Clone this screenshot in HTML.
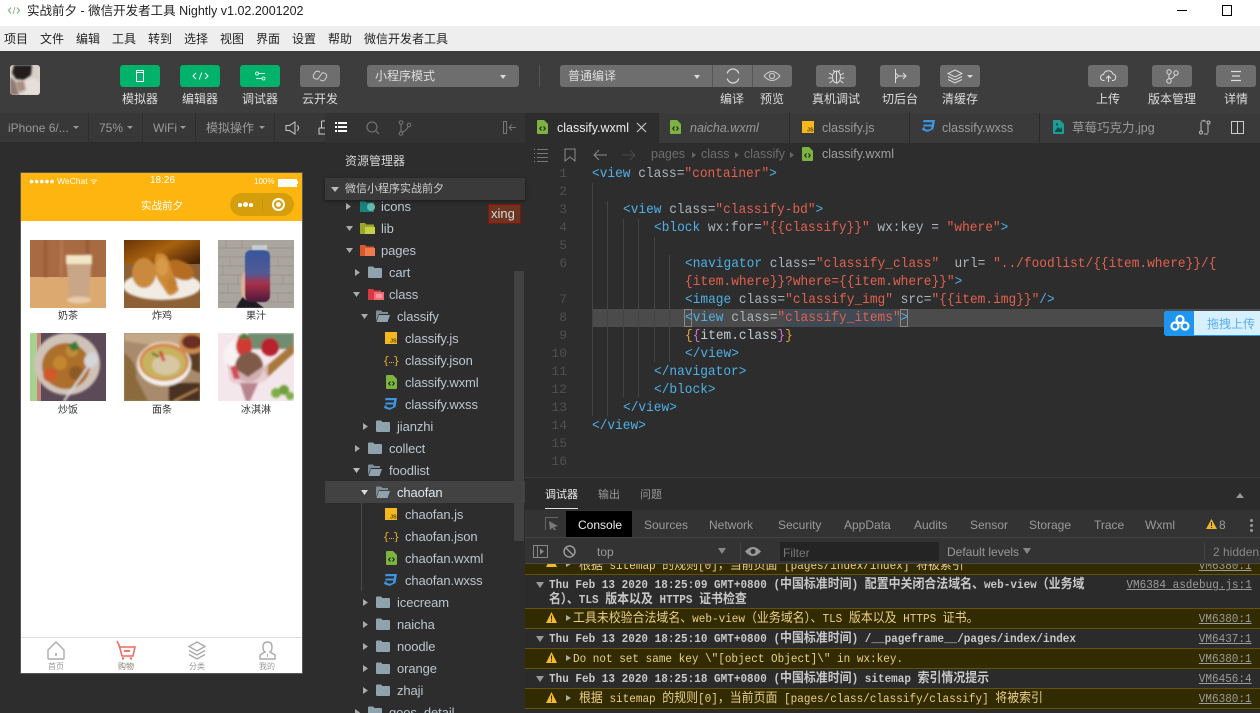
<!DOCTYPE html>
<html><head><meta charset="utf-8"><title>实战前夕</title>
<style>
html,body{margin:0;padding:0;width:1260px;height:713px;overflow:hidden;background:#2d2d2d}
body{position:relative;font-family:"Liberation Sans","Noto Sans CJK SC",sans-serif;font-size:12px;color:#ddd}
.a{position:absolute;white-space:pre;line-height:18px}
.b{position:absolute}
.btn{position:absolute;top:65px;width:40px;height:22px;border-radius:3px;background:#6e6e6e}
.g{background:#00b26a}
.lb{position:absolute;top:90px;line-height:18px;color:#ddd;text-align:center;white-space:pre}
.sv{position:absolute;overflow:visible}
.t{position:absolute;white-space:pre;line-height:18px;color:#bcc6cf;font-size:13px;letter-spacing:-.1px;margin-top:1px}
.cd{position:absolute;white-space:pre;font-family:"Liberation Mono",monospace;font-size:14px;line-height:18px;color:#aeb6bd;transform:scaleX(.9167);transform-origin:0 0;margin-top:1px}
.n{position:absolute;width:30px;left:537px;text-align:right;font-family:"Liberation Mono",monospace;font-size:13px;line-height:18px;color:#505050;margin-top:1px}
.k{color:#4fb0e6}.s{color:#e2614f}
.ig{position:absolute;width:1px;background:#444}
.ct{position:absolute;top:516px;line-height:18px;color:#9a9a9a;white-space:pre}
.r{position:absolute;left:525px;width:735px}
.w{background:#332b00;border-top:1px solid #665200;border-bottom:1px solid #665200;box-sizing:border-box}
.m{position:absolute;white-space:pre;font-family:"Liberation Mono","Noto Sans CJK SC",monospace;font-size:12px;line-height:18px;transform:scaleX(.9167);transform-origin:0 0}
.m i{font-style:normal;font-size:13px}
.lg{color:#c8c8c8;font-weight:bold}
.wt{color:#e9cf88}
.lk{position:absolute;right:8px;font-family:"Liberation Mono",monospace;font-size:12px;line-height:18px;color:#9a9a9a;text-decoration:underline;white-space:pre;transform:scaleX(.9167);transform-origin:100% 0}
.lab{position:absolute;width:76px;text-align:center;font-size:10px;line-height:14px;color:#333}
.tb{position:absolute;font-size:8px;line-height:10px;top:662px;color:#999;text-align:center;width:40px}
.ph{position:absolute;width:76px;height:68px;overflow:hidden}
</style></head><body>
<svg width="0" height="0" style="position:absolute"><defs>
<symbol id="fc" viewBox="0 0 14 12"><path d="M0 1.5Q0 .5 1 .5H5L6.5 2H13Q14 2 14 3V11Q14 12 13 12H1Q0 12 0 11Z" fill="#8fa2ad"/></symbol>
<symbol id="fo" viewBox="0 0 14 12"><path d="M0 1.5Q0 .5 1 .5H5L6.5 2H12V4H3L0 11Z" fill="#7d8e98"/><path d="M3 5H14L11.5 12H.5Z" fill="#8fa2ad"/></symbol>
<symbol id="js" viewBox="0 0 12 12"><rect width="12" height="12" fill="#f5b81f"/><text x="5" y="10.5" font-size="5.5" font-weight="bold" font-family="Liberation Sans" fill="#5b4300">JS</text></symbol>
<symbol id="jn" viewBox="0 0 16 12"><text x="0" y="10" font-size="11" font-family="Liberation Mono" fill="#f0b429">{</text><text x="10" y="10" font-size="11" font-family="Liberation Mono" fill="#f0b429">}</text><rect x="6" y="8" width="1" height="1" fill="#f0b429"/><rect x="8" y="8" width="1" height="1" fill="#f0b429"/><rect x="10" y="8" width="1" height="1" fill="#f0b429"/></symbol>
<symbol id="wx" viewBox="0 0 11 14"><path d="M1 0H7L11 4V13Q11 14 10 14H1Q0 14 0 13V1Q0 0 1 0Z" fill="#7cb342"/><path d="M4.5 6.5L2.8 8.5L4.5 10.5M6.5 6.5L8.2 8.5L6.5 10.5" fill="none" stroke="#20300f" stroke-width="1.2"/></symbol>
<symbol id="cs" viewBox="0 0 13 12"><path d="M1.5 0H13L11.5 9L5.5 12L0 10L.6 7.5H3L2.7 8.8L5.7 9.8L9 8.6L9.4 6.5H1.2L1.6 4.5H9.8L10.2 2.3H1Z" fill="#3d94e0"/></symbol>
<symbol id="jp" viewBox="0 0 11 14"><path d="M1 0H7L11 4V13Q11 14 10 14H1Q0 14 0 13V1Q0 0 1 0Z" fill="#1f9c94"/><path d="M2 11L5 7L7 9L9 7V12H2Z" fill="#0d4f4b"/><circle cx="4" cy="4.5" r="1.2" fill="#0d4f4b"/></symbol>
<filter id="bl"><feGaussianBlur stdDeviation="1"/></filter>
<filter id="bs"><feGaussianBlur stdDeviation=".5"/></filter>
</defs></svg>

<!-- title bar -->
<div class="b" style="left:0;top:0;width:1260px;height:26px;background:#fff"></div>
<svg class="sv" style="left:8px;top:6px" width="12" height="9"><path d="M3 1.500L.5 4.500L3 7.500" fill="none" stroke="#66bb6a" stroke-width="1"/><path d="M9 1.500L11.500 4.500L9 7.500" fill="none" stroke="#66bb6a" stroke-width="1"/><path d="M7 1L5 8" stroke="#999" stroke-width=".8"/></svg>
<div class="a" style="left:27px;top:2px;color:#222;font-size:12.5px">实战前夕 - 微信开发者工具 Nightly v1.02.2001202</div>
<div class="b" style="left:1177px;top:10px;width:10px;height:1px;background:#000"></div>
<div class="b" style="left:1222px;top:5px;width:8px;height:9px;border:1px solid #000"></div>
<!-- menu -->
<div class="b" style="left:0;top:26px;width:1260px;height:25px;background:#eeeeee"></div>
<div class="a" style="left:4px;top:30px;color:#222">项目</div><div class="a" style="left:40px;top:30px;color:#222">文件</div><div class="a" style="left:76px;top:30px;color:#222">编辑</div><div class="a" style="left:112px;top:30px;color:#222">工具</div><div class="a" style="left:148px;top:30px;color:#222">转到</div><div class="a" style="left:184px;top:30px;color:#222">选择</div><div class="a" style="left:220px;top:30px;color:#222">视图</div><div class="a" style="left:256px;top:30px;color:#222">界面</div><div class="a" style="left:292px;top:30px;color:#222">设置</div><div class="a" style="left:328px;top:30px;color:#222">帮助</div><div class="a" style="left:364px;top:30px;color:#222">微信开发者工具</div>

<!-- toolbar -->
<div class="b" style="left:0;top:51px;width:1260px;height:62px;background:#3d3d3d"></div>
<svg class="sv" style="left:10px;top:65px" width="30" height="30" viewBox="0 0 30 30"><clipPath id="av"><rect width="30" height="30" rx="3"/></clipPath><g clip-path="url(#av)"><rect width="30" height="30" fill="#d9d0ca"/><g filter="url(#bl)"><path d="M4 0H22L21 10L14 15L6 14L2 8Z" fill="#241e1a"/><path d="M0 12L5 16L9 30H0Z" fill="#8f7a72"/><path d="M14 16L24 13L30 18V30H14Z" fill="#e6ded8"/><path d="M6 17L14 16L16 25L9 27Z" fill="#a98e84"/></g></g></svg>

<div class="btn g" style="left:120px"></div><div class="btn g" style="left:180px"></div><div class="btn g" style="left:240px"></div><div class="btn" style="left:300px"></div>
<svg class="sv" style="left:135px;top:70px" width="10" height="12"><rect x="1.5" y=".5" width="7" height="11" fill="none" stroke="#fff"/><line x1="2" y1="2.5" x2="8" y2="2.5" stroke="#fff"/></svg>
<svg class="sv" style="left:192px;top:71px" width="17" height="10"><path d="M4 2L1 5L4 8M13 2L16 5L13 8M9.8 1.5L7.2 8.5" fill="none" stroke="#fff"/></svg>
<svg class="sv" style="left:255px;top:71px" width="11" height="10"><circle cx="2" cy="2.5" r="1.5" fill="none" stroke="#cfeee0"/><path d="M4 2.5H10M1 7.5H7" stroke="#cfeee0"/><circle cx="8.5" cy="7.5" r="1.5" fill="none" stroke="#cfeee0"/></svg>
<svg class="sv" style="left:312px;top:70px" width="16" height="12"><path d="M8 2.5A3 3 0 0 0 3 2.5L1.5 5A3 3 0 0 0 6 8.5M8 9.5A3 3 0 0 0 13 9.5L14.5 7A3 3 0 0 0 10 3.5M5.5 9.5L10.5 2.5" fill="none" stroke="#d2d2d2"/></svg>
<div class="lb" style="left:120px;width:40px">模拟器</div><div class="lb" style="left:180px;width:40px">编辑器</div><div class="lb" style="left:240px;width:40px">调试器</div><div class="lb" style="left:300px;width:40px">云开发</div>

<div class="btn" style="left:367px;width:152px"></div>
<div class="a" style="left:375px;top:67px;color:#ddd">小程序模式</div>
<div class="b" style="left:500px;top:75px;border:3px solid transparent;border-top:4px solid #ddd;border-bottom:0"></div>
<div class="b" style="left:539px;top:65px;width:1px;height:22px;background:#555"></div>

<div class="btn" style="left:560px;width:232px"></div>
<div class="a" style="left:568px;top:67px;color:#ddd">普通编译</div>
<div class="b" style="left:694px;top:75px;border:3px solid transparent;border-top:4px solid #ddd;border-bottom:0"></div>
<div class="b" style="left:712px;top:65px;width:1px;height:22px;background:#555"></div><div class="b" style="left:752px;top:65px;width:1px;height:22px;background:#555"></div>
<svg class="sv" style="left:725px;top:68px" width="16" height="16"><path d="M2.2 5.5A6 6 0 0 1 13.8 5.5M13.8 10.5A6 6 0 0 1 2.2 10.5" fill="none" stroke="#dcdcdc" stroke-width="1.2"/></svg>
<svg class="sv" style="left:763px;top:70px" width="18" height="12"><path d="M1 6Q9 -3 17 6Q9 15 1 6Z" fill="none" stroke="#cfcfcf"/><circle cx="9" cy="6" r="2.6" fill="none" stroke="#cfcfcf"/></svg>
<div class="lb" style="left:712px;width:40px">编译</div><div class="lb" style="left:752px;width:40px">预览</div>

<div class="btn" style="left:816px"></div><div class="btn" style="left:880px"></div><div class="btn" style="left:940px"></div>
<svg class="sv" style="left:828px;top:67px" width="17" height="18"><ellipse cx="8.5" cy="10" rx="4" ry="6" fill="none" stroke="#ddd"/><path d="M8.5 4V16M5 3L7 5M12 3L10 5M1 6L4.5 8M16 6L12.5 8M0.5 11H4M16.5 11H13M1.5 16L5 13.5M15.5 16L12 13.5" stroke="#ddd" fill="none"/></svg>
<svg class="sv" style="left:893px;top:69px" width="15" height="14"><path d="M2.5 0V14M5 7H13M10 4L13 7L10 10M2.5 4L5.5 7L2.5 10" fill="none" stroke="#ddd"/></svg>
<svg class="sv" style="left:947px;top:69px" width="26" height="15"><path d="M8 1L15 4.5L8 8L1 4.5ZM1 7.5L8 11L15 7.5M1 10.5L8 14L15 10.5" fill="none" stroke="#ddd"/><path d="M20 6H26L23 9Z" fill="#ddd"/></svg>
<div class="lb" style="left:806px;width:60px">真机调试</div><div class="lb" style="left:870px;width:60px">切后台</div><div class="lb" style="left:930px;width:60px">清缓存</div>

<div class="btn" style="left:1088px"></div><div class="btn" style="left:1152px"></div><div class="btn" style="left:1216px"></div>
<svg class="sv" style="left:1100px;top:70px" width="17" height="12"><path d="M4.5 10.5H3.5A3 3 0 0 1 3.5 4.5A5 5 0 0 1 13 4A3.3 3.3 0 0 1 13 10.5H12" fill="none" stroke="#e2e2e2"/><path d="M8.5 12V6M6 8.5L8.5 6L11 8.5" fill="none" stroke="#e2e2e2"/></svg>
<svg class="sv" style="left:1166px;top:69px" width="13" height="15"><circle cx="3" cy="3" r="2.2" fill="none" stroke="#ddd"/><circle cx="3" cy="12" r="2.2" fill="none" stroke="#ddd"/><circle cx="10" cy="4" r="2.2" fill="none" stroke="#ddd"/><path d="M3 5V10M9 6Q8 9 4.5 10" fill="none" stroke="#ddd"/></svg>
<svg class="sv" style="left:1230px;top:70px" width="12" height="12"><path d="M1 1.5H11M2 6H10M1 10.5H11" stroke="#ddd" stroke-width="1.2"/></svg>
<div class="lb" style="left:1088px;width:40px">上传</div><div class="lb" style="left:1142px;width:60px">版本管理</div><div class="lb" style="left:1216px;width:40px">详情</div>

<!-- left panel -->
<div class="b" style="left:0;top:113px;width:325px;height:600px;background:#2d2d2d"></div>
<div class="b" style="left:0;top:113px;width:325px;height:30px;background:#383838;border-bottom:1px solid #2a2a2a;box-sizing:border-box"></div>
<div class="a" style="left:8px;top:119px;color:#9a9a9a">iPhone 6/...</div>
<div class="b" style="left:73px;top:126px;border:3px solid transparent;border-top:3px solid #999;border-bottom:0"></div>
<div class="b" style="left:88px;top:113px;width:1px;height:30px;background:#2e2e2e"></div>
<div class="a" style="left:99px;top:119px;color:#9a9a9a">75%</div>
<div class="b" style="left:127px;top:126px;border:3px solid transparent;border-top:3px solid #999;border-bottom:0"></div>
<div class="b" style="left:142px;top:113px;width:1px;height:30px;background:#2e2e2e"></div>
<div class="a" style="left:153px;top:119px;color:#9a9a9a">WiFi</div>
<div class="b" style="left:180px;top:126px;border:3px solid transparent;border-top:3px solid #999;border-bottom:0"></div>
<div class="b" style="left:195px;top:113px;width:1px;height:30px;background:#2e2e2e"></div>
<div class="a" style="left:206px;top:119px;color:#9a9a9a">模拟操作</div>
<div class="b" style="left:259px;top:126px;border:3px solid transparent;border-top:3px solid #999;border-bottom:0"></div>
<div class="b" style="left:274px;top:113px;width:1px;height:30px;background:#2e2e2e"></div>
<svg class="sv" style="left:285px;top:121px" width="16" height="14"><path d="M1 4.5H4.5L10 1V13L4.5 9.5H1ZM12.5 4Q14.5 7 12.5 10" fill="none" stroke="#ccc"/></svg>
<svg class="sv" style="left:318px;top:120px" width="7" height="15"><path d="M3.5 1H7M3.5 1V8M1 8H7M1 8V14H7" fill="none" stroke="#ccc"/></svg>

<!-- phone -->
<div class="b" style="left:20px;top:172px;width:281px;height:500px;background:#fff;border:1px solid #555"></div>
<div class="b" style="left:21px;top:173px;width:281px;height:48px;background:#ffb510"></div>
<div class="a" style="left:29px;top:172px;color:#fff;font-size:8.5px;line-height:18px">●●●●● WeChat ᯤ</div>
<div class="a" style="left:150px;top:172px;color:#fff;font-size:10px">18:26</div>
<div class="a" style="left:254px;top:173px;color:#fff;font-size:8px">100%</div>
<div class="b" style="left:278px;top:179px;width:17px;height:6px;border:1px solid #fff;background:#fff"></div><div class="b" style="left:297px;top:181px;width:1px;height:3px;background:#fff"></div>
<div class="a" style="left:141px;top:197px;color:#fff;font-size:10.5px">实战前夕</div>
<div class="b" style="left:230px;top:193px;width:64px;height:23px;border-radius:12px;background:#d49e0d"></div>
<div class="b" style="left:238px;top:203px;width:3.5px;height:3.5px;border-radius:50%;background:#fff"></div><div class="b" style="left:243px;top:202px;width:5px;height:5px;border-radius:50%;background:#fff"></div><div class="b" style="left:249px;top:203px;width:3.5px;height:3.5px;border-radius:50%;background:#fff"></div>
<div class="b" style="left:262px;top:197px;width:1px;height:15px;background:#c9950c"></div>
<div class="b" style="left:272px;top:198px;width:9px;height:9px;border:2px solid #fff;border-radius:50%;box-sizing:content-box"></div><div class="b" style="left:276px;top:202px;width:5px;height:5px;border-radius:50%;background:#fff"></div>

<!-- photos -->
<svg class="ph" style="left:30px;top:240px" viewBox="0 0 76 68"><rect width="76" height="38" fill="#a86a42"/><rect y="37" width="76" height="31" fill="#dcaa70"/><g filter="url(#bl)"><rect x="14" y="0" width="3" height="37" fill="#9a5a34"/><rect x="30" y="0" width="3" height="37" fill="#b57a52"/><rect x="56" y="0" width="3" height="37" fill="#985832"/><path d="M36 15H62L59 58Q49 62 39 58Z" fill="#c9a687"/><rect x="36" y="15" width="26" height="9" fill="#f1e6c8"/><ellipse cx="49" cy="60" rx="12" ry="3.500" fill="#e6cba8"/></g></svg>
<svg class="ph" style="left:124px;top:240px" viewBox="0 0 76 68"><defs><linearGradient id="w2" x1="0" y1="0" x2="1" y2=".7"><stop offset="0" stop-color="#6a3408"/><stop offset=".5" stop-color="#a8620f"/><stop offset="1" stop-color="#4a2408"/></linearGradient></defs><rect width="76" height="28" fill="url(#w2)"/><rect y="24" width="76" height="44" fill="#8d6035"/><g filter="url(#bl)"><ellipse cx="38" cy="46" rx="39" ry="14" fill="#f1ece3"/><ellipse cx="20" cy="33" rx="12" ry="15" fill="#c98a3c"/><ellipse cx="56" cy="30" rx="15" ry="9" fill="#b56d22" transform="rotate(25 56 30)"/><path d="M32 14Q44 10 46 26L55 50Q46 60 42 52L34 40Q28 28 32 14Z" fill="#cd8a36"/><ellipse cx="38" cy="27" rx="6" ry="9" fill="#d89a48"/><ellipse cx="48" cy="44" rx="5" ry="7" fill="#c4802e"/></g></svg>
<svg class="ph" style="left:218px;top:240px" viewBox="0 0 76 68"><rect width="76" height="68" fill="#aaa59e"/><g stroke="#979289" stroke-width=".7"><path d="M0 8H76M0 17H76M0 26H76M0 35H76M0 44H76M0 53H76M0 62H76"/><path d="M8 0V8M24 0V8M40 8V17M12 17V26M60 17V26M5 26V35M20 35V44M65 35V44M10 44V53M60 53V62M25 53V62"/></g><g filter="url(#bs)"><path d="M18 68Q24 56 28 55L38 62L46 68Z" fill="#1c1c20"/><path d="M24 56Q21 40 26 32L32 34V58L28 60Z" fill="#dcaf98"/><rect x="34" y="5" width="15" height="6" fill="#c8ccd0" rx="1"/><defs><linearGradient id="bt" x1="0" y1="0" x2="0" y2="1"><stop offset="0" stop-color="#35599c"/><stop offset=".45" stop-color="#525a94"/><stop offset=".65" stop-color="#a8304a"/><stop offset="1" stop-color="#4a1a3a"/></linearGradient></defs><rect x="27" y="10" width="25" height="52" rx="6" fill="url(#bt)"/></g></svg>

<svg class="ph" style="left:30px;top:333px" viewBox="0 0 76 68"><rect width="76" height="68" fill="#5d4a58"/><rect width="7" height="68" fill="#a8d090"/><rect x="7" width="4" height="68" fill="#c8867a"/><g filter="url(#bl)"><ellipse cx="37" cy="31" rx="33" ry="31" fill="#cfc3b8"/><ellipse cx="36" cy="33" rx="24" ry="23" fill="#ad6f2c"/><circle cx="20" cy="42" r="7" fill="#cf5a2c"/><circle cx="42" cy="18" r="6" fill="#c08a3a"/><circle cx="30" cy="30" r="7" fill="#c4862e"/><circle cx="46" cy="40" r="7" fill="#8d5a26"/><path d="M38 12L46 8L50 16L42 18Z" fill="#3f7a33"/><path d="M34 68L58 34" stroke="#d9d9d9" stroke-width="2"/><ellipse cx="61" cy="27" rx="6.500" ry="8" fill="#d4d6da" transform="rotate(30 61 27)"/></g></svg>
<svg class="ph" style="left:124px;top:333px" viewBox="0 0 76 68"><rect width="76" height="68" fill="#a88b6c"/><g filter="url(#bl)"><path d="M0 0H76V12L40 14L0 8Z" fill="#c3a888"/><path d="M45 50H76V68H45Z" fill="#4a3322"/><path d="M60 14H76V40L62 34Z" fill="#5a3a24"/><path d="M0 20Q14 30 12 45L24 68H0Z" fill="#8b6a3d"/><ellipse cx="40" cy="31" rx="27" ry="22" fill="#f1efe8"/><ellipse cx="40" cy="29" rx="25" ry="19" fill="#d68a50"/><ellipse cx="40" cy="30" rx="22" ry="16" fill="#c7b25f"/><ellipse cx="42" cy="32" rx="14" ry="10" fill="#d8c7a4"/><path d="M36 18L40 28" stroke="#d33a2a" stroke-width="3"/><path d="M28 20L35 24" stroke="#3c6d2c" stroke-width="2"/><ellipse cx="68" cy="10" rx="13" ry="11" fill="#c98a4e"/><ellipse cx="68" cy="9" rx="10" ry="7" fill="#6a2f22"/><path d="M50 68L74 56" stroke="#b98450" stroke-width="2"/></g></svg>
<svg class="ph" style="left:218px;top:333px" viewBox="0 0 76 68"><rect width="76" height="68" fill="#f4e7ec"/><g filter="url(#bl)"><rect x="30" width="46" height="16" fill="#6f8d72"/><circle cx="52" cy="14" r="9" fill="#b7242f"/><path d="M5 20Q15 0 30 8L26 40H8Z" fill="#f7f2f3"/><ellipse cx="26" cy="13" rx="8" ry="11" fill="#cf3b30"/><path d="M20 4L26 0L32 4L26 7Z" fill="#4d7a3a"/><ellipse cx="31" cy="34" rx="14" ry="15" fill="#7f5a4a"/><path d="M45 36L76 10V20L50 44Z" fill="#a7773a"/><path d="M8 30L12 48Q30 58 50 46V30L30 44Z" fill="#e6c6cc" opacity=".8"/><path d="M12 34L16 46H22L18 32Z" fill="#d14e55"/><path d="M22 50H40L32 68H28Z" fill="#b88490"/><circle cx="58" cy="60" r="5" fill="#7fae47"/><circle cx="66" cy="57" r="5" fill="#6f9f3c"/><circle cx="72" cy="63" r="4" fill="#7fae47"/></g></svg>
<div class="lab" style="left:30px;top:310px">奶茶</div><div class="lab" style="left:124px;top:310px">炸鸡</div><div class="lab" style="left:218px;top:310px">果汁</div>
<div class="lab" style="left:30px;top:404px">炒饭</div><div class="lab" style="left:124px;top:404px">面条</div><div class="lab" style="left:218px;top:404px">冰淇淋</div>

<!-- tab bar -->
<div class="b" style="left:21px;top:637px;width:281px;height:1px;background:#ddd"></div>
<svg class="sv" style="left:47px;top:641px" width="18" height="19"><path d="M1 9L9 1L17 9V17Q17 18 16 18H2Q1 18 1 17Z" fill="none" stroke="#aaa" stroke-width="1.4"/><path d="M9 12V15" stroke="#aaa" stroke-width="1.6"/></svg>
<svg class="sv" style="left:116px;top:641px" width="20" height="19"><path d="M1 0L4 6H19L17 15H6L3 4" fill="none" stroke="#f0695a" stroke-width="1.5"/><path d="M8 10H14" stroke="#f0695a" stroke-width="1.8"/><circle cx="7" cy="17.500" r="1.200" fill="#f0695a"/><circle cx="15" cy="17.500" r="1.200" fill="#f0695a"/></svg>
<svg class="sv" style="left:187px;top:641px" width="20" height="19"><path d="M10 1L18 5.500L10 10L2 5.500Z M2 9.500L10 14L18 9.500 M2 13.500L10 18L18 13.500" fill="none" stroke="#aaa" stroke-width="1.4"/></svg>
<svg class="sv" style="left:259px;top:641px" width="17" height="19"><path d="M8.500 1Q13 1 13 6Q13 10 11 11L16 14V18H1V14L6 11Q4 10 4 6Q4 1 8.500 1Z" fill="none" stroke="#aaa" stroke-width="1.4"/><path d="M8.500 13V16" stroke="#aaa"/></svg>
<div class="tb" style="left:36px">首页</div><div class="tb" style="left:106px;color:#8a8272">购物</div><div class="tb" style="left:177px">分类</div><div class="tb" style="left:247px">我的</div>

<!-- explorer -->
<div class="b" style="left:325px;top:113px;width:200px;height:600px;background:#2d2d2d;overflow:hidden"></div>
<div class="b" style="left:325px;top:113px;width:200px;height:30px;background:#333"></div>
<div class="b" style="left:335px;top:122px;width:2px;height:2px;background:#fff;box-shadow:0 4px #fff,0 8px #fff"></div><div class="b" style="left:338px;top:122px;width:9px;height:2px;background:#fff;box-shadow:0 4px #fff,0 8px #fff"></div>
<svg class="sv" style="left:366px;top:121px" width="14" height="14"><circle cx="6" cy="6" r="5" fill="none" stroke="#6e6e6e" stroke-width="1.3"/><path d="M9.500 9.500L13 13" stroke="#6e6e6e" stroke-width="1.3"/></svg>
<svg class="sv" style="left:398px;top:120px" width="14" height="16"><circle cx="3" cy="2.500" r="1.800" fill="none" stroke="#7a7a7a"/><circle cx="3" cy="13.500" r="1.800" fill="none" stroke="#7a7a7a"/><circle cx="11" cy="5" r="1.800" fill="none" stroke="#7a7a7a"/><path d="M3 4.500V11.500M10 7Q8 11 4 12" fill="none" stroke="#7a7a7a"/></svg>
<svg class="sv" style="left:503px;top:121px" width="14" height="13"><rect x=".5" y=".5" width="3" height="12" fill="none" stroke="#777"/><path d="M13 6.500H6M9 3.500L6 6.500L9 9.500" fill="none" stroke="#777"/></svg>
<div class="a" style="left:345px;top:152px;color:#d6d6d6">资源管理器</div>

<div class="b" style="left:514px;top:271px;width:10px;height:270px;background:#424242"></div>

<!-- tree -->
<svg class="sv" style="left:346px;top:203px" width="6" height="7"><path d="M0 0L5 3.500L0 7Z" fill="#aaa"/></svg>
<svg class="sv" style="left:360px;top:200px" width="16" height="12" viewBox="0 0 16 12"><path d="M0 1H5L6.500 2.500H14V12H0Z" fill="#16857c"/><circle cx="11" cy="7" r="4" fill="#68b8af"/></svg><div class="t" style="left:381px;top:197px">icons</div>
<svg class="sv" style="left:346px;top:226px" width="7" height="5"><path d="M0 0H7L3.500 5Z" fill="#aaa"/></svg>
<svg class="sv" style="left:360px;top:222px" width="16" height="12"><path d="M0 1H5L6.500 2.500H14V12H0Z" fill="#9aa52e"/><rect x="5" y="5" width="10" height="7" fill="#c5cf4a"/></svg><div class="t" style="left:381px;top:219px">lib</div>
<svg class="sv" style="left:346px;top:248px" width="7" height="5"><path d="M0 0H7L3.500 5Z" fill="#aaa"/></svg>
<svg class="sv" style="left:360px;top:244px" width="16" height="12"><path d="M0 1H5L6.500 2.500H14V12H0Z" fill="#d8592f"/><rect x="5" y="4" width="10" height="8" fill="#f07b50"/></svg><div class="t" style="left:381px;top:241px">pages</div>
<svg class="sv" style="left:355px;top:269px" width="6" height="7"><path d="M0 0L5 3.500L0 7Z" fill="#aaa"/></svg><svg class="sv" style="left:368px;top:266px" width="14" height="12"><use href="#fc"/></svg><div class="t" style="left:389px;top:263px">cart</div>
<svg class="sv" style="left:353px;top:292px" width="7" height="5"><path d="M0 0H7L3.500 5Z" fill="#aaa"/></svg>
<svg class="sv" style="left:368px;top:288px" width="16" height="12"><path d="M0 1H5L6.500 2.500H13V12H0Z" fill="#d83a3f"/><rect x="6" y="4" width="10" height="8" fill="#ef6d6f"/><path d="M8 7H14M8 9H14" stroke="#fbd"/></svg><div class="t" style="left:389px;top:285px">class</div>
<svg class="sv" style="left:361px;top:314px" width="7" height="5"><path d="M0 0H7L3.500 5Z" fill="#aaa"/></svg><svg class="sv" style="left:376px;top:310px" width="14" height="12"><use href="#fo"/></svg><div class="t" style="left:397px;top:307px">classify</div>
<svg class="sv" style="left:385px;top:332px" width="12" height="12"><use href="#js"/></svg><div class="t" style="left:405px;top:329px">classify.js</div>
<svg class="sv" style="left:383px;top:354px" width="16" height="12"><use href="#jn"/></svg>
<svg class="sv" style="left:386px;top:375px" width="11" height="14"><use href="#wx"/></svg>
<svg class="sv" style="left:384px;top:398px" width="13" height="12"><use href="#cs"/></svg>
<div class="t" style="left:405px;top:351px">classify.json</div><div class="t" style="left:405px;top:373px">classify.wxml</div><div class="t" style="left:405px;top:395px">classify.wxss</div>
<svg class="sv" style="left:363px;top:423px" width="6" height="7"><path d="M0 0L5 3.500L0 7Z" fill="#aaa"/></svg><svg class="sv" style="left:376px;top:420px" width="14" height="12"><use href="#fc"/></svg><div class="t" style="left:397px;top:417px">jianzhi</div>
<svg class="sv" style="left:355px;top:445px" width="6" height="7"><path d="M0 0L5 3.500L0 7Z" fill="#aaa"/></svg><svg class="sv" style="left:368px;top:442px" width="14" height="12"><use href="#fc"/></svg><div class="t" style="left:389px;top:439px">collect</div>
<svg class="sv" style="left:353px;top:468px" width="7" height="5"><path d="M0 0H7L3.500 5Z" fill="#bbb"/></svg><svg class="sv" style="left:368px;top:464px" width="14" height="12"><use href="#fo"/></svg><div class="t" style="left:389px;top:461px">foodlist</div>
<div class="b" style="left:325px;top:481px;width:200px;height:22px;background:#424242"></div>
<svg class="sv" style="left:361px;top:490px" width="7" height="5"><path d="M0 0H7L3.500 5Z" fill="#ddd"/></svg><svg class="sv" style="left:376px;top:486px" width="14" height="12"><use href="#fo"/></svg><div class="t" style="left:397px;top:483px;color:#e2e8ee">chaofan</div>
<div class="b" style="left:361px;top:503px;width:1px;height:88px;background:#4a4a4a"></div>
<svg class="sv" style="left:385px;top:508px" width="12" height="12"><use href="#js"/></svg><div class="t" style="left:405px;top:505px">chaofan.js</div>
<svg class="sv" style="left:383px;top:530px" width="16" height="12"><use href="#jn"/></svg><div class="t" style="left:405px;top:527px">chaofan.json</div>
<svg class="sv" style="left:386px;top:551px" width="11" height="14"><use href="#wx"/></svg><div class="t" style="left:405px;top:549px">chaofan.wxml</div>
<svg class="sv" style="left:384px;top:574px" width="13" height="12"><use href="#cs"/></svg><div class="t" style="left:405px;top:571px">chaofan.wxss</div>
<svg class="sv" style="left:363px;top:599px" width="6" height="7"><path d="M0 0L5 3.500L0 7Z" fill="#aaa"/></svg><svg class="sv" style="left:376px;top:596px" width="14" height="12"><use href="#fc"/></svg><div class="t" style="left:397px;top:593px">icecream</div>
<svg class="sv" style="left:363px;top:621px" width="6" height="7"><path d="M0 0L5 3.500L0 7Z" fill="#aaa"/></svg><svg class="sv" style="left:376px;top:618px" width="14" height="12"><use href="#fc"/></svg><div class="t" style="left:397px;top:615px">naicha</div>
<svg class="sv" style="left:363px;top:643px" width="6" height="7"><path d="M0 0L5 3.500L0 7Z" fill="#aaa"/></svg><svg class="sv" style="left:376px;top:640px" width="14" height="12"><use href="#fc"/></svg><div class="t" style="left:397px;top:637px">noodle</div>
<svg class="sv" style="left:363px;top:665px" width="6" height="7"><path d="M0 0L5 3.500L0 7Z" fill="#aaa"/></svg><svg class="sv" style="left:376px;top:662px" width="14" height="12"><use href="#fc"/></svg><div class="t" style="left:397px;top:659px">orange</div>
<svg class="sv" style="left:363px;top:687px" width="6" height="7"><path d="M0 0L5 3.500L0 7Z" fill="#aaa"/></svg><svg class="sv" style="left:376px;top:684px" width="14" height="12"><use href="#fc"/></svg><div class="t" style="left:397px;top:681px">zhaji</div>
<svg class="sv" style="left:355px;top:709px" width="6" height="7"><path d="M0 0L5 3.500L0 7Z" fill="#aaa"/></svg><svg class="sv" style="left:368px;top:706px" width="14" height="12"><use href="#fc"/></svg><div class="t" style="left:389px;top:703px">goos_detail</div>

<div class="b" style="left:325px;top:178px;width:200px;height:22px;background:#3a3a3a;box-shadow:0 1px 3px #1a1a1a"></div>
<div class="b" style="left:331px;top:187px;border:4px solid transparent;border-top:5px solid #bbb;border-bottom:0"></div>
<div class="a" style="left:345px;top:180px;color:#cfcfcf;font-size:11px">微信小程序实战前夕</div>
<div class="b" style="left:488px;top:204px;width:31px;height:18px;background:#6b3520;border:1px solid #8a1010"></div>
<div class="a" style="left:491px;top:205px;color:#d8d8d8;font-size:13px">xing</div>

<!-- editor -->
<div class="b" style="left:525px;top:113px;width:735px;height:30px;background:#3a3a3a"></div>
<div class="b" style="left:525px;top:113px;width:133px;height:30px;background:#2d2d2d"></div>
<div class="b" style="left:658px;top:113px;width:1px;height:30px;background:#2a2a2a"></div><div class="b" style="left:789px;top:113px;width:1px;height:30px;background:#2a2a2a"></div><div class="b" style="left:909px;top:113px;width:1px;height:30px;background:#2a2a2a"></div><div class="b" style="left:1039px;top:113px;width:1px;height:30px;background:#2a2a2a"></div>
<svg class="sv" style="left:537px;top:120px" width="11" height="14"><use href="#wx"/></svg><div class="a" style="left:557px;top:119px;color:#eee;font-size:12.5px">classify.wxml</div>
<svg class="sv" style="left:636px;top:122px" width="11" height="11"><path d="M1 1L10 10M10 1L1 10" stroke="#ccc" stroke-width="1.100"/></svg>
<svg class="sv" style="left:670px;top:120px" width="11" height="14"><use href="#wx"/></svg><div class="a" style="left:690px;top:119px;color:#9a9a9a;font-size:12.5px;font-style:italic">naicha.wxml</div>
<svg class="sv" style="left:802px;top:121px" width="12" height="12"><use href="#js"/></svg><div class="a" style="left:822px;top:119px;color:#9a9a9a;font-size:12.5px">classify.js</div>
<svg class="sv" style="left:922px;top:120px" width="13" height="12"><use href="#cs"/></svg><div class="a" style="left:942px;top:119px;color:#9a9a9a;font-size:12.5px">classify.wxss</div>
<svg class="sv" style="left:1053px;top:120px" width="11" height="14"><use href="#jp"/></svg><div class="a" style="left:1072px;top:119px;color:#9a9a9a;font-size:12.5px">草莓巧克力.jpg</div>
<svg class="sv" style="left:1198px;top:120px" width="14" height="15"><path d="M3 2V11M10 4V13M3 1H7L5.500 0M10 14H6" fill="none" stroke="#bbb"/><circle cx="3" cy="12.500" r="1.500" fill="none" stroke="#bbb"/><circle cx="10.500" cy="2.500" r="1.500" fill="none" stroke="#bbb"/></svg>
<svg class="sv" style="left:1231px;top:121px" width="13" height="13"><rect x=".5" y=".5" width="12" height="12" fill="none" stroke="#ccc"/><path d="M6.500 1V12" stroke="#ccc"/></svg>

<!-- breadcrumbs -->
<div class="b" style="left:534px;top:149px;width:1px;height:1px;background:#888;box-shadow:0 4px #888,0 8px #888,0 12px #888"></div><div class="b" style="left:537px;top:149px;width:11px;height:1px;background:#777;box-shadow:0 4px #777,0 8px #777,0 12px #777"></div>
<svg class="sv" style="left:564px;top:148px" width="12" height="14"><path d="M1 1H11V13L6 9L1 13Z" fill="none" stroke="#8a8a8a"/></svg>
<svg class="sv" style="left:593px;top:149px" width="14" height="12"><path d="M14 6H1M6 1L1 6L6 11" fill="none" stroke="#8a8a8a"/></svg>
<svg class="sv" style="left:622px;top:149px" width="14" height="12"><path d="M0 6H13M8 1L13 6L8 11" fill="none" stroke="#4a4a4a"/></svg>
<div class="a" style="left:651px;top:145px;color:#6e6e6e;font-size:12.5px">pages</div>
<div class="b" style="left:692px;top:152px;border:3px solid transparent;border-left:4px solid #666;border-right:0"></div>
<div class="a" style="left:701px;top:145px;color:#6e6e6e;font-size:12.5px">class</div>
<div class="b" style="left:735px;top:152px;border:3px solid transparent;border-left:4px solid #666;border-right:0"></div>
<div class="a" style="left:744px;top:145px;color:#6e6e6e;font-size:12.5px">classify</div>
<div class="b" style="left:790px;top:152px;border:3px solid transparent;border-left:4px solid #666;border-right:0"></div>
<svg class="sv" style="left:802px;top:147px" width="11" height="14"><use href="#wx"/></svg>
<div class="a" style="left:822px;top:145px;color:#9f9f9f;font-size:12.5px">classify.wxml</div>

<!-- code -->
<div class="b" style="left:592px;top:309px;width:668px;height:18px;background:#4b4b4b"></div>
<div class="b" style="left:785px;top:309px;width:112px;height:18px;background:#3f4a55"></div>
<div class="ig" style="left:592px;top:183px;height:233px"></div><div class="ig" style="left:607px;top:201px;height:215px"></div><div class="ig" style="left:623px;top:219px;height:178px"></div><div class="ig" style="left:638px;top:219px;height:178px"></div><div class="ig" style="left:654px;top:237px;height:125px"></div><div class="ig" style="left:669px;top:255px;height:107px"></div>
<div class="b" style="left:684px;top:309px;width:8px;height:18px;border:1px solid #888;box-sizing:border-box"></div>
<div class="b" style="left:900px;top:309px;width:8px;height:18px;border:1px solid #888;box-sizing:border-box"></div>
<div class="n" style="top:164px">1</div><div class="n" style="top:182px">2</div><div class="n" style="top:200px">3</div><div class="n" style="top:218px">4</div><div class="n" style="top:236px">5</div><div class="n" style="top:254px">6</div><div class="n" style="top:290px">7</div><div class="n" style="top:308px">8</div><div class="n" style="top:326px">9</div><div class="n" style="top:344px">10</div><div class="n" style="top:362px">11</div><div class="n" style="top:380px">12</div><div class="n" style="top:398px">13</div><div class="n" style="top:416px">14</div><div class="n" style="top:434px">15</div><div class="n" style="top:452px">16</div>
<div class="cd" style="left:592px;top:164px"><span class="k">&lt;view</span> class=<span class="s">"container"</span><span class="k">&gt;</span></div>
<div class="cd" style="left:623px;top:200px"><span class="k">&lt;view</span> class=<span class="s">"classify-bd"</span><span class="k">&gt;</span></div>
<div class="cd" style="left:654px;top:218px"><span class="k">&lt;block</span> wx:for=<span class="s">"{{classify}}"</span> wx:key = <span class="s">"where"</span><span class="k">&gt;</span></div>
<div class="cd" style="left:685px;top:254px"><span class="k">&lt;navigator</span> class=<span class="s">"classify_class"</span>  url= <span class="s">"../foodlist/{{item.where}}/{</span></div>
<div class="cd" style="left:685px;top:272px"><span class="s">{item.where}}?where={{item.where}}"</span><span class="k">&gt;</span></div>
<div class="cd" style="left:685px;top:290px"><span class="k">&lt;image</span> class=<span class="s">"classify_img"</span> src=<span class="s">"{{item.img}}"</span><span class="k">/&gt;</span></div>
<div class="cd" style="left:685px;top:308px"><span class="k">&lt;view</span> class=<span class="s">"classify_items"</span><span class="k">&gt;</span></div>
<div class="cd" style="left:685px;top:326px"><span style="color:#e5a23c">{</span><span style="color:#d46fd0">{</span><span style="color:#c5ccd3">item.class</span><span style="color:#d46fd0">}</span><span style="color:#e5a23c">}</span></div>
<div class="cd" style="left:685px;top:344px"><span class="k">&lt;/view&gt;</span></div>
<div class="cd" style="left:654px;top:362px"><span class="k">&lt;/navigator&gt;</span></div>
<div class="cd" style="left:654px;top:380px"><span class="k">&lt;/block&gt;</span></div>
<div class="cd" style="left:623px;top:398px"><span class="k">&lt;/view&gt;</span></div>
<div class="cd" style="left:592px;top:416px"><span class="k">&lt;/view&gt;</span></div>

<!-- upload widget -->
<div class="b" style="left:1164px;top:311px;width:96px;height:25px;background:#d7f0fd;border-radius:3px 0 0 3px;border-bottom:1px solid #2196f3;box-sizing:border-box"></div>
<div class="b" style="left:1164px;top:311px;width:30px;height:25px;background:#1e96f0;border-radius:3px 0 0 3px"></div>
<svg class="sv" style="left:1170px;top:314px" width="20" height="18"><circle cx="10" cy="5.500" r="3.500" fill="none" stroke="#fff" stroke-width="2.200"/><circle cx="5" cy="12" r="3.500" fill="none" stroke="#fff" stroke-width="2.200"/><circle cx="15" cy="12" r="3.500" fill="none" stroke="#fff" stroke-width="2.200"/></svg>
<div class="a" style="left:1207px;top:315px;color:#5aaef0">拖拽上传</div>

<!-- console -->
<div class="b" style="left:525px;top:477px;width:735px;height:236px;background:#2b2b2b"></div>
<div class="b" style="left:525px;top:477px;width:735px;height:1px;background:#3a3a3a"></div>
<div class="a" style="left:545px;top:486px;color:#eee;font-size:11px">调试器</div><div class="a" style="left:598px;top:486px;color:#999;font-size:11px">输出</div><div class="a" style="left:640px;top:486px;color:#999;font-size:11px">问题</div>
<div class="b" style="left:545px;top:508px;width:33px;height:1px;background:#e0e0e0"></div>
<div class="b" style="left:1236px;top:493px;border:4px solid transparent;border-bottom:5px solid #999;border-top:0"></div>
<div class="b" style="left:525px;top:510px;width:735px;height:27px;background:#333"></div>
<div class="b" style="left:525px;top:537px;width:735px;height:1px;background:#444"></div>
<svg class="sv" style="left:545px;top:517px" width="14" height="14"><path d="M13 .5H.5V13" fill="none" stroke="#666"/><path d="M4 4L13 9L9 10L11 13H9L7.500 10.500L5 13Z" fill="#7a7a7a"/></svg>
<div class="b" style="left:566px;top:511px;width:66px;height:26px;background:#000"></div>
<div class="ct" style="left:578px;color:#eee">Console</div><div class="ct" style="left:644px">Sources</div><div class="ct" style="left:709px">Network</div><div class="ct" style="left:778px">Security</div><div class="ct" style="left:844px">AppData</div><div class="ct" style="left:914px">Audits</div><div class="ct" style="left:970px">Sensor</div><div class="ct" style="left:1029px">Storage</div><div class="ct" style="left:1094px">Trace</div><div class="ct" style="left:1145px">Wxml</div>
<svg class="sv" style="left:1206px;top:519px" width="11" height="10"><path d="M5.500 0L11 10H0Z" fill="#f0b429"/><path d="M5.500 3V7M5.500 8V9" stroke="#333"/></svg><div class="ct" style="left:1219px">8</div>
<div class="b" style="left:1250px;top:519px;width:3px;height:3px;background:#999;box-shadow:0 5px #999,0 10px #999;border-radius:50%"></div>

<div class="b" style="left:525px;top:538px;width:735px;height:26px;background:#333;border-bottom:1px solid #4a4a4a;box-sizing:border-box"></div>
<svg class="sv" style="left:533px;top:545px" width="15" height="13"><rect x=".5" y=".5" width="14" height="12" fill="none" stroke="#888"/><path d="M4.500 1V12" stroke="#888"/><path d="M7 3.500L11 6.500L7 9.500Z" fill="#888"/></svg>
<svg class="sv" style="left:563px;top:545px" width="13" height="13"><circle cx="6.500" cy="6.500" r="5.500" fill="none" stroke="#999" stroke-width="1.500"/><path d="M2.500 2.500L10.500 10.500" stroke="#999" stroke-width="1.500"/></svg>
<div class="a" style="left:597px;top:543px;color:#999">top</div>
<div class="b" style="left:718px;top:548px;border:4px solid transparent;border-top:6px solid #888;border-bottom:0"></div>
<div class="b" style="left:740px;top:542px;width:1px;height:18px;background:#444"></div>
<svg class="sv" style="left:745px;top:546px" width="16" height="11"><path d="M0 5.500Q8 -3.500 16 5.500Q8 14.500 0 5.500Z" fill="#999"/><circle cx="8" cy="5.500" r="2.500" fill="#333"/></svg>
<div class="b" style="left:780px;top:542px;width:159px;height:19px;background:#242424"></div>
<div class="a" style="left:783px;top:544px;color:#777">Filter</div>
<div class="a" style="left:947px;top:543px;color:#999">Default levels</div>
<div class="b" style="left:1023px;top:548px;border:4px solid transparent;border-top:6px solid #888;border-bottom:0"></div>
<div class="b" style="left:1204px;top:543px;width:1px;height:17px;background:#444"></div>
<div class="a" style="left:1213px;top:543px;color:#888">2 hidden</div>

<div class="r w" style="top:564px;height:11px;border-top:0;overflow:hidden"><svg class="sv" style="left:21px;top:-8px" width="11" height="11"><path d="M5.500 0L11 11H0Z" fill="#f2b92a"/></svg><div class="b" style="left:41px;top:-3px;border:3px solid transparent;border-left:5px solid #aaa;border-right:0"></div><div class="m wt" style="left:54px;top:-7px"><i>根据</i> sitemap <i>的规则</i>[0]<i>，当前页面</i> [pages/index/index] <i>将被索引</i></div><div class="lk" style="top:-7px">VM6380:1</div></div>

<div class="b" style="left:536px;top:582px;border:4px solid transparent;border-top:6px solid #999;border-bottom:0"></div>
<div class="m lg" style="left:549px;top:576px">Thu Feb 13 2020 18:25:09 GMT+0800 (<i>中国标准时间</i>) <i>配置中关闭合法域名、</i>web-view<i>（业务域</i></div>
<div class="m lg" style="left:549px;top:591px"><i>名）、</i>TLS <i>版本以及</i> HTTPS <i>证书检查</i></div>
<div class="lk" style="top:576px">VM6384 asdebug.js:1</div>

<div class="r w" style="top:608px;height:21px"></div>
<svg class="sv" style="left:546px;top:612px" width="11" height="11"><path d="M5.500 0L11 11H0Z" fill="#f2b92a"/><path d="M5.500 3.500V7.500M5.500 8.500V10" stroke="#332b00"/></svg>
<div class="b" style="left:566px;top:615px;border:3px solid transparent;border-left:5px solid #aaa;border-right:0"></div>
<div class="m wt" style="left:573px;top:610px"><i>工具未校验合法域名、</i>web-view<i>（业务域名）、</i>TLS <i>版本以及</i> HTTPS <i>证书。</i></div>
<div class="lk" style="top:610px">VM6380:1</div>

<div class="b" style="left:536px;top:636px;border:4px solid transparent;border-top:6px solid #999;border-bottom:0"></div>
<div class="m lg" style="left:549px;top:630px">Thu Feb 13 2020 18:25:10 GMT+0800 (<i>中国标准时间</i>) /__pageframe__/pages/index/index</div>
<div class="lk" style="top:630px">VM6437:1</div>

<div class="r w" style="top:648px;height:21px"></div>
<svg class="sv" style="left:546px;top:652px" width="11" height="11"><path d="M5.500 0L11 11H0Z" fill="#f2b92a"/><path d="M5.500 3.500V7.500M5.500 8.500V10" stroke="#332b00"/></svg>
<div class="b" style="left:566px;top:655px;border:3px solid transparent;border-left:5px solid #aaa;border-right:0"></div>
<div class="m wt" style="left:573px;top:650px">Do not set same key \"[object Object]\" in wx:key.</div>
<div class="lk" style="top:650px">VM6380:1</div>

<div class="b" style="left:536px;top:676px;border:4px solid transparent;border-top:6px solid #999;border-bottom:0"></div>
<div class="m lg" style="left:549px;top:670px">Thu Feb 13 2020 18:25:18 GMT+0800 (<i>中国标准时间</i>) sitemap <i>索引情况提示</i></div>
<div class="lk" style="top:670px">VM6456:4</div>

<div class="r w" style="top:688px;height:21px"></div>
<svg class="sv" style="left:546px;top:692px" width="11" height="11"><path d="M5.500 0L11 11H0Z" fill="#f2b92a"/><path d="M5.500 3.500V7.500M5.500 8.500V10" stroke="#332b00"/></svg>
<div class="b" style="left:566px;top:695px;border:3px solid transparent;border-left:5px solid #aaa;border-right:0"></div>
<div class="m wt" style="left:579px;top:690px"><i>根据</i> sitemap <i>的规则</i>[0]<i>，当前页面</i> [pages/class/classify/classify] <i>将被索引</i></div>
<div class="lk" style="top:690px">VM6380:1</div>
</body></html>
